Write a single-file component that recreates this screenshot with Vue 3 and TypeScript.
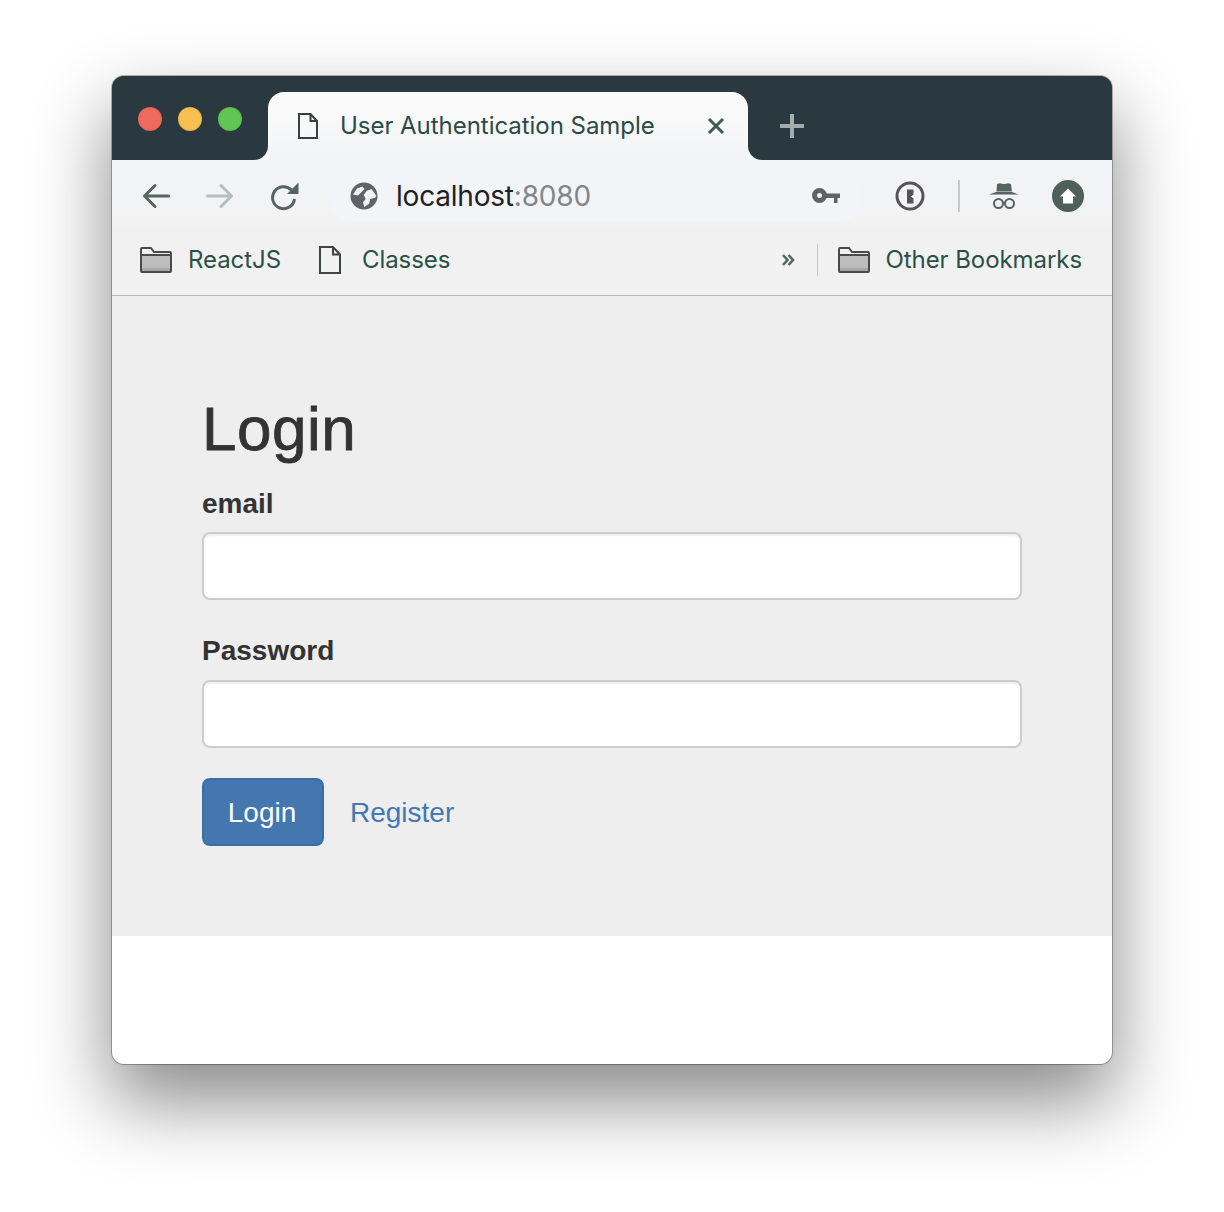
<script setup lang="ts">
import { ref } from 'vue';

const email = ref('');
const password = ref('');
const lights: string[] = ['red', 'yellow', 'green'];
</script>

<template>
  <div class="page">
    <div class="window">
      <div class="tabstrip">
        <div class="strip-left">
          <span v-for="l in lights" :key="l" class="light" :class="l"></span>
        </div>
        <div class="tab">
          <svg class="file-icon" width="20" height="26" viewBox="0 0 20 26">
            <path d="M1 1h11.500l6.500 7v17H1zM12.500 1v7H19" fill="none" stroke="#3a3f3e" stroke-width="2" />
          </svg>
          <span class="tab-title">User Authentication Sample</span>
          <svg class="tab-close" width="18" height="18" viewBox="0 0 18 18">
            <path d="M2 2l14 14M16 2L2 16" stroke="#3d5a55" stroke-width="3" />
          </svg>
        </div>
        <div class="strip-right">
          <svg width="26" height="26" viewBox="0 0 26 26">
            <path d="M13 1v24M1 13h24" stroke="#a4adad" stroke-width="4" />
          </svg>
        </div>
      </div>

      <div class="toolbar">
        <svg class="tool" width="32" height="32" viewBox="0 0 32 32">
          <path d="M28.500 16H4.500M15 5.500L4.500 16 15 26.500" fill="none" stroke="#54655f" stroke-width="3" stroke-linecap="round" stroke-linejoin="round" />
        </svg>
        <svg class="tool" width="32" height="32" viewBox="0 0 32 32">
          <path d="M3.500 16h24M17 5.500L27.500 16 17 26.500" fill="none" stroke="#b6bdba" stroke-width="3" stroke-linecap="round" stroke-linejoin="round" />
        </svg>
        <svg class="tool" width="32" height="32" viewBox="0 0 32 32">
          <path d="M26.500 19A11 11 0 1 1 23.500 10" fill="none" stroke="#54655f" stroke-width="3" />
          <path d="M30.500 2.500v11.500H19z" fill="#54655f" />
        </svg>

        <div class="omnibox">
          <svg width="32" height="32" viewBox="0 0 32 32">
            <circle cx="16" cy="16" r="13.500" fill="#5f6368" />
            <path d="M5 14.500l4-6 5.500-2 2 2.500-3.500 3.500-3 3zM18.500 11l5-2 4.800 6.700-1.300 2-4.700 1.300-1.300 4.700-4.700 3.300-1.300-4.700 2.700-3.300-2-4z" fill="#f2f3f6" />
          </svg>
          <span class="url">localhost<span class="port">:8080</span></span>
          <svg class="key" width="28" height="18" viewBox="0 0 28 18">
            <circle cx="7.500" cy="8.500" r="5" fill="none" stroke="#5f6368" stroke-width="5" />
            <path d="M12 6.500h16v4.500h-2.500v5H22v-5H12z" fill="#5f6368" />
          </svg>
        </div>

        <svg class="tool" width="32" height="32" viewBox="0 0 32 32">
          <circle cx="16" cy="16" r="13" fill="none" stroke="#555" stroke-width="3" />
          <path d="M13 9.500h6.500v5l-2.500 2 2.500 2v5H13z" fill="#555" />
        </svg>
        <span class="divider"></span>
        <svg class="tool" width="32" height="32" viewBox="0 0 32 32">
          <path d="M9 4l3-.8 3 .8h2l3-.8 3 .8 1 7.500H8.500zM8 12h16l7 2.500H1z" fill="#54655f" />
          <circle cx="10.500" cy="23.500" r="4.500" fill="none" stroke="#54655f" stroke-width="2" />
          <circle cx="21.500" cy="23.500" r="4.500" fill="none" stroke="#54655f" stroke-width="2" />
          <path d="M15 23h2" stroke="#54655f" stroke-width="2" />
        </svg>
        <svg class="tool" width="32" height="32" viewBox="0 0 32 32">
          <circle cx="16" cy="16" r="16" fill="#4f5f59" />
          <path d="M16 8.500l8 8h-3v7H11v-7H8z" fill="#fff" />
        </svg>
      </div>

      <div class="bookmarks">
        <a class="bookmark">
          <svg width="32" height="26" viewBox="0 0 32 26">
            <path d="M1 8h30v16H1z" fill="#bdbdbd" />
            <path d="M1 21h30v3H1z" fill="#a6a6a6" />
            <path d="M2 25a1 1 0 0 1-1-1V2a1 1 0 0 1 1-1h9l3 4h16a1 1 0 0 1 1 1v18a1 1 0 0 1-1 1zM1 8h30" fill="none" stroke="#4a4a4a" stroke-width="2" />
          </svg>
          <span>ReactJS</span>
        </a>
        <a class="bookmark doc">
          <svg width="22" height="28" viewBox="0 0 22 28">
            <path d="M1 1h13l7 7.500V27H1zM14 1v7.500h7" fill="none" stroke="#3f4543" stroke-width="2" />
          </svg>
          <span>Classes</span>
        </a>
        <svg class="chevrons" width="14" height="14" viewBox="0 0 14 14">
          <path d="M2 2l4.500 5L2 12M7.500 2L12 7l-4.500 5" fill="none" stroke="#54655f" stroke-width="2.600" />
        </svg>
        <span class="bm-divider"></span>
        <a class="bookmark other">
          <svg width="32" height="26" viewBox="0 0 32 26">
            <path d="M1 8h30v16H1z" fill="#bdbdbd" />
            <path d="M1 21h30v3H1z" fill="#a6a6a6" />
            <path d="M2 25a1 1 0 0 1-1-1V2a1 1 0 0 1 1-1h9l3 4h16a1 1 0 0 1 1 1v18a1 1 0 0 1-1 1zM1 8h30" fill="none" stroke="#4a4a4a" stroke-width="2" />
          </svg>
          <span>Other Bookmarks</span>
        </a>
      </div>

      <div class="content">
        <div class="jumbotron">
          <h1>Login</h1>
          <form class="form" @submit.prevent>
            <div class="form-group">
              <label for="email">email</label>
              <input id="email" v-model="email" type="text" />
            </div>
            <div class="form-group">
              <label for="password">Password</label>
              <input id="password" v-model="password" type="password" />
            </div>
            <div class="actions">
              <button type="submit">Login</button>
              <a class="link">Register</a>
            </div>
          </form>
        </div>
      </div>
    </div>
  </div>
</template>

<style scoped>
.page {
  box-sizing: border-box;
  width: 1224px;
  height: 1212px;
  padding: 76px 112px 0;
  overflow: hidden;
  background: #fff;
}

.window {
  width: 1000px;
  height: 988px;
  border-radius: 12px;
  overflow: hidden;
  background: #fff;
  box-shadow: 0 0 0 1px rgba(0, 0, 0, 0.28), 0 36px 76px 2px rgba(0, 0, 0, 0.46);
  display: flex;
  flex-direction: column;
}

.tabstrip {
  height: 84px;
  display: flex;
  background: linear-gradient(#29393f 0 50%, #f8f8f9 50%);
}

.strip-left {
  width: 156px;
  flex: none;
  box-sizing: border-box;
  padding: 31px 0 0 26px;
  display: flex;
  gap: 16px;
  background: #29393f;
  border-bottom-right-radius: 14px;
}

.light {
  width: 24px;
  height: 24px;
  border-radius: 50%;
  box-sizing: border-box;
  border: 1px solid rgba(0, 0, 0, 0.06);
}

.red {
  background: #ee6a5f;
}

.yellow {
  background: #f6bf4f;
}

.green {
  background: #61c454;
}

.tab {
  width: 480px;
  flex: none;
  margin-top: 16px;
  box-sizing: border-box;
  padding: 0 22px 0 30px;
  display: flex;
  align-items: center;
  border-radius: 16px 16px 0 0;
  background: linear-gradient(#fbfbfb, #f3f4f6);
}

.file-icon {
  flex: none;
  margin-right: 22px;
}

.tab-title {
  flex: 1;
  font: 400 24px/32px Inter, sans-serif;
  letter-spacing: -0.04px;
  color: #2b4a45;
  white-space: nowrap;
}

.tab-close {
  flex: none;
  margin-right: 1px;
}

.strip-right {
  flex: 1;
  padding: 37px 0 0 31px;
  background: #29393f;
  border-bottom-left-radius: 14px;
}

.strip-right svg {
  display: block;
}

.toolbar {
  height: 68px;
  box-sizing: border-box;
  padding: 4px 28px 0;
  display: flex;
  align-items: center;
  gap: 32px;
  background: linear-gradient(#f3f4f6, #f2f2f3);
}

.tool {
  flex: none;
}

.omnibox {
  width: 534px;
  height: 52px;
  margin-left: -4px;
  box-sizing: border-box;
  padding: 0 20px;
  display: flex;
  align-items: center;
  gap: 16px;
  flex: none;
  border-radius: 26px;
  background: #f3f4f7;
}

.url {
  flex: 1;
  font: 400 28px/36px Inter, sans-serif;
  letter-spacing: -0.2px;
  color: #202124;
}

.port {
  color: #80868b;
}

.key {
  flex: none;
  margin-right: 2px;
}

.divider {
  width: 2px;
  height: 32px;
  margin-right: -4px;
  background: #c5cac8;
  flex: none;
}

.bookmarks {
  height: 68px;
  box-sizing: border-box;
  padding: 0 30px 4px 28px;
  display: flex;
  align-items: center;
  background: #f1f1f2;
  border-bottom: 1px solid #b5b5b5;
}

.bookmark {
  display: flex;
  align-items: center;
  gap: 16px;
  font: 400 24px/32px Inter, sans-serif;
  letter-spacing: -0.07px;
  color: #2a5045;
  white-space: nowrap;
}

.doc {
  margin-left: 38px;
  gap: 21px;
}

.other {
  gap: 15px;
}

.chevrons {
  margin-left: auto;
  flex: none;
}

.bm-divider {
  width: 1px;
  height: 32px;
  margin: 0 20px 0 22px;
  background: #c8c8c8;
  flex: none;
}

.content {
  flex: 1;
}

.jumbotron {
  height: 640px;
  box-sizing: border-box;
  padding: 97px 90px 0;
  background: #eeeeee;
  font-family: "Liberation Sans", Arial, sans-serif;
  color: #333;
}

h1 {
  margin: 0;
  font-size: 62px;
  font-weight: 400;
  line-height: 72px;
  letter-spacing: 0.5px;
  -webkit-text-stroke: 0.8px #333;
}

.form {
  margin-top: 19px;
}

.form-group {
  margin-bottom: 31px;
}

.form-group:first-child label {
  margin-bottom: 8px;
}

label {
  display: block;
  margin-bottom: 9px;
  font-size: 28px;
  font-weight: 700;
  line-height: 40px;
}

input {
  display: block;
  width: 100%;
  height: 68px;
  box-sizing: border-box;
  padding: 12px 24px;
  border: 2px solid #ccc;
  border-radius: 8px;
  background: #fff;
  box-shadow: inset 0 2px 2px rgba(0, 0, 0, 0.07);
  font-size: 28px;
  outline: none;
}

.actions {
  display: flex;
  align-items: center;
  gap: 26px;
  margin-top: -1px;
}

button {
  width: 122px;
  height: 68px;
  padding: 2px 2px 0 0;
  border: 2px solid #3b6ea5;
  border-radius: 8px;
  background: #4476b0;
  color: #fff;
  font: 400 28px/40px "Liberation Sans", Arial, sans-serif;
}

.link {
  padding-top: 2px;
  font-size: 28px;
  line-height: 40px;
  color: #4478b3;
}
</style>

<style>
body {
  margin: 0;
  background: #fff;
}
</style>
